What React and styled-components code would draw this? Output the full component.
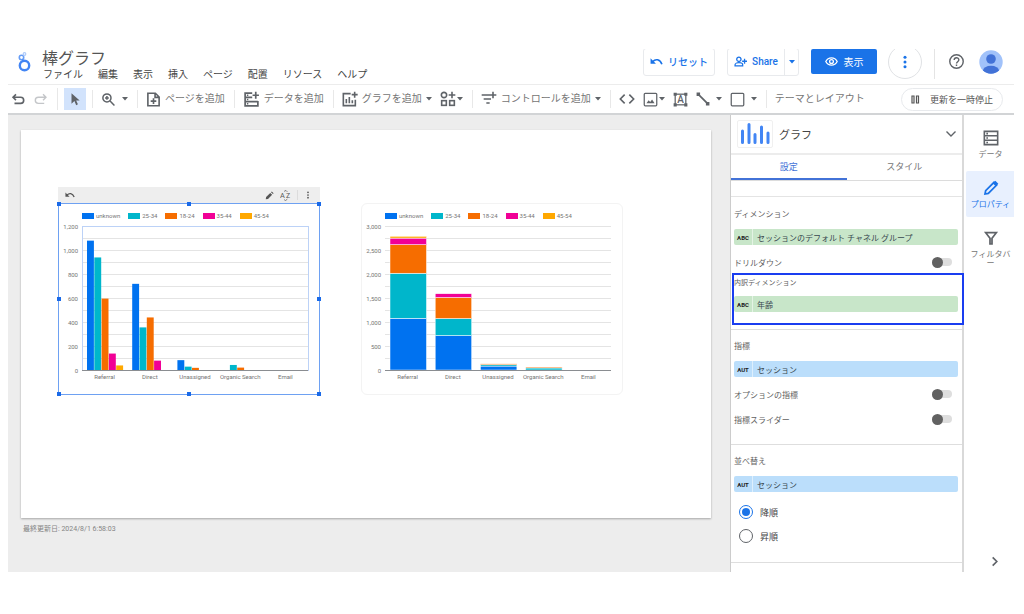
import React, { useState } from 'react'
import styled, { createGlobalStyle, css } from 'styled-components'

const GlobalStyle = createGlobalStyle`
  * {
    box-sizing: border-box;
  }
  body {
    margin: 0;
    background: #fff;
    color: #5f6368;
    font-family: Roboto, "Noto Sans CJK JP", sans-serif;
    font-size: 8px;
  }
  button {
    margin: 0;
    padding: 0;
    border: 0;
    background: none;
    color: inherit;
    font: inherit;
    white-space: nowrap;
    cursor: pointer;
  }
`

/* ---------- frame ---------- */

const Page = styled.div`
  display: flex;
  flex-direction: column;
  min-height: 100vh;
  padding: 49px 10px 42px 8px;
`
const Header = styled.header`
  display: flex;
  align-items: center;
  height: 36px;
  padding: 0 11px 10px 8px;
  border-bottom: 1px solid #ececec;
  overflow: hidden;
`
const Body = styled.div`
  display: flex;
  flex: 1;
`

/* ---------- header ---------- */

const TitleBlock = styled.div`
  display: flex;
  flex-direction: column;
  margin: 8px auto 0 10px;
`
const Title = styled.h1`
  margin: 0;
  color: #555;
  font-size: 16px;
  font-weight: 400;
  line-height: 18px;
`
const Menu = styled.nav`
  display: flex;
  gap: 15px;
  padding-left: 1px;
`
const MenuItem = styled.button`
  color: #444;
  font-size: 10px;
  line-height: 14px;
`
const OutlineGroup = styled.div`
  display: flex;
  flex-shrink: 0;
  height: 28px;
  margin-right: 12px;
  border: 1px solid #e8eaed;
  border-radius: 3px;
`
const OutlineButton = styled.button`
  display: flex;
  align-items: center;
  justify-content: center;
  gap: 5px;
  min-width: ${ props => props.$width }px;
  color: #1a73e8;
  font-size: 10px;
  font-weight: 500;

  & + & {
    border-left: 1px solid #e8eaed;
  }
`
const ViewButton = styled.button`
  display: flex;
  align-items: center;
  justify-content: center;
  flex-shrink: 0;
  gap: 6px;
  width: 66px;
  height: 25px;
  border-radius: 2px;
  background: #1a73e8;
  color: #fff;
  font-size: 10px;
`
const RoundButton = styled.button`
  display: flex;
  align-items: center;
  justify-content: center;
  flex-shrink: 0;
  width: 34px;
  height: 34px;
  margin: 0 12px 0 11px;
  border: 1px solid #e0e2e5;
  border-radius: 50%;
  color: #1a73e8;
`
const HeaderRule = styled.span`
  width: 1px;
  height: 34px;
  margin-right: 13px;
  background: #e4e4e4;
`
const IconButton = styled.button`
  display: flex;
  flex-shrink: 0;
`
const Avatar = styled.svg`
  flex-shrink: 0;
  margin-left: 14px;
`

/* ---------- toolbar ---------- */

const Toolbar = styled.div`
  display: flex;
  align-items: center;
  height: 30px;
  padding: 0 11px 0 2px;
  border-bottom: 2px solid #d2d4d6;
  color: #5f6368;
`
const ToolGroup = styled.div`
  display: flex;
  align-items: center;
  flex-shrink: 0;
  gap: ${ props => props.$gap || 8 }px;
  padding: 0 ${ props => props.$right || 9 }px 0 ${ props => props.$left || 8 }px;

  & + & {
    border-left: 1px solid #e8e8e8;
  }
`
const ToolButton = styled.button`
  display: flex;
  align-items: center;
  gap: ${ props => props.$gap || 4 }px;
  height: 18px;
  color: ${ props => props.$muted ? '#c4c6c9' : '#5f6368' };
  ${ props => props.$active && css`
    justify-content: center;
    width: 22px;
    height: 22px;
    background: #d2e3fc;
  ` }
`
const ToolText = styled.span`
  color: #757575;
  font-size: 10px;
  line-height: 14px;
`
const PauseButton = styled.button`
  display: flex;
  align-items: center;
  flex-shrink: 0;
  gap: 10px;
  height: 23px;
  margin-left: auto;
  padding: 0 9px;
  border: 1px solid #e8eaed;
  border-radius: 12px;
  color: #555;
  font-size: 9px;
`

/* ---------- report ---------- */

const Workspace = styled.main`
  flex: 1;
  min-width: 0;
  padding: 15px 19px 0 13px;
  background: #ededed;
`
const Report = styled.section`
  display: flex;
  align-items: flex-start;
  gap: 41px;
  min-height: 388px;
  padding: 57px 37px;
  background: #fff;
  box-shadow: 0 1px 2px rgba(0, 0, 0, 0.3);
`
const ChartFrame = styled.figure`
  flex: 0 0 262px;
  margin: ${ props => props.$bare ? '16px 0 0' : 0 };
`
const ChartToolbar = styled.div`
  display: flex;
  align-items: center;
  gap: 6px;
  height: 16px;
  padding: 0 8px 0 7px;
  background: #eee;
  color: #555;
`
const ChartToolRule = styled.span`
  width: 1px;
  height: 10px;
  background: #dcdcdc;
`
const Spacer = styled.span`
  flex: 1;
`
const ChartCard = styled.div`
  position: relative;
  height: 192px;
  padding-top: 8px;
  border-radius: ${ props => props.$selected ? 0 : '6px' };
  border: 1px solid ${ props => props.$selected ? '#6ea1f2' : '#f3f3f3' };
`
const Handle = styled.i`
  position: absolute;
  left: ${ props => props.$x }%;
  top: ${ props => props.$y }%;
  width: 4px;
  height: 4px;
  margin: -2px;
  background: #1a6ae8;
`
const Legend = styled.ul`
  display: flex;
  gap: 8px;
  margin: 0;
  padding: 0 0 0 23px;
  list-style: none;
  color: #757575;
  font-size: 6px;
  line-height: 7px;
`
const LegendItem = styled.li`
  display: flex;
  align-items: center;
  gap: 2px;

  &::before {
    content: '';
    width: 12px;
    height: 6px;
    background: ${ props => props.$color };
  }
`
const Plot = styled.svg`
  display: block;
  font-size: 6px;
  fill: #757575;
`
const Updated = styled.p`
  margin: 5px 2px;
  color: #858585;
  font-size: 7px;
  line-height: 12px;
`

/* ---------- properties panel ---------- */

const Panel = styled.aside`
  flex: 0 0 234px;
  border-left: 1px solid #ccc;
  border-right: 2px solid #d9d9d9;
  background: #fff;
`
const PanelHead = styled.div`
  display: flex;
  align-items: center;
  gap: 6px;
  height: 40px;
  padding: 0 5px 0 6px;
  border-bottom: 2px solid #ececec;
`
const ChartThumb = styled.span`
  display: flex;
  align-items: flex-end;
  justify-content: center;
  width: 36px;
  height: 28px;
  padding-bottom: 3px;
  border: 1px solid #f0f0f0;
  border-radius: 2px;
`
const PanelTitle = styled.h2`
  flex: 1;
  margin: 0;
  color: #444;
  font-size: 11px;
  font-weight: 400;
`
const Tabs = styled.div`
  display: flex;
  height: 26px;
  border-bottom: 1px solid #dcdcdc;
`
const Tab = styled.button`
  flex: 1;
  padding-bottom: 1px;
  border-bottom: 2px solid ${ props => props['aria-selected'] ? '#4272d7' : 'transparent' };
  color: ${ props => props['aria-selected'] ? '#4272d7' : '#757575' };
  font-size: 9px;
`
const Strip = styled.div`
  height: 16px;
  border-bottom: 1px solid #e4e4e4;
`
const Section = styled.section`
  padding: ${ props => props.$top || 9 }px 4px ${ props => props.$bottom }px 3px;
  border-bottom: 1px solid #dedede;
`
const Label = styled.h3`
  margin: 0 0 ${ props => props.$small ? 5 : 6 }px;
  color: #616161;
  font-size: ${ props => props.$small ? 7 : 8 }px;
  font-weight: 400;
  line-height: 16px;
`
const Chip = styled.button`
  display: flex;
  align-items: center;
  width: 100%;
  height: 16px;
  border-radius: 2px;
  background: ${ props => props.$kind === 'ABC' ? '#c8e6c9' : '#bbdefb' };
  color: #37474f;
  font-size: 8px;
`
const ChipType = styled.span`
  width: 19px;
  height: 16px;
  margin-right: 4px;
  border-right: 1px solid rgba(255, 255, 255, 0.5);
  color: #222;
  font-size: 6px;
  font-weight: 700;
  line-height: 17px;
`
const SwitchRow = styled.label`
  display: flex;
  align-items: center;
  justify-content: space-between;
  height: 16px;
  margin-top: 9px;
  padding-right: 6px;
  color: #616161;
  font-size: 8px;
`
const Switch = styled.input`
  appearance: none;
  display: flex;
  align-items: center;
  width: 20px;
  height: 8px;
  margin: 0;
  border-radius: 4px;
  background: #dedede;

  &::before {
    content: '';
    width: 11px;
    height: 11px;
    flex-shrink: 0;
    border-radius: 50%;
    background: #616161;
  }
  &:checked {
    justify-content: flex-end;
  }
`
const Highlight = styled.div`
  margin: 3px -6px 0 -2px;
  padding: 0 4px 11px 0;
  border: 2px solid #1a3df0;
`
const RadioRow = styled.label`
  display: flex;
  align-items: center;
  gap: 7px;
  height: 16px;
  margin: ${ props => props.$first ? 12 : 8 }px 0 0 5px;
  color: #444;
  font-size: 9px;
`
const Radio = styled.input`
  appearance: none;
  width: 14px;
  height: 14px;
  margin: 0;
  border: 1px solid #5f6368;
  border-radius: 50%;

  &:checked {
    padding: 2px;
    border-color: #1a73e8;
    background: #1a73e8;
    background-clip: content-box;
  }
`

/* ---------- right rail ---------- */

const Rail = styled.nav`
  display: flex;
  flex: 0 0 50px;
  flex-direction: column;
  gap: 4px;
  padding: 6px 0 5px 2px;
`
const RailItem = styled.button`
  display: flex;
  flex-direction: column;
  align-items: center;
  gap: 4px;
  height: 46px;
  padding: 9px 2px 0 3px;
  border-radius: 2px 0 0 2px;
  background: ${ props => props.$active ? '#e8f0fe' : 'none' };
  color: ${ props => props.$active ? '#1a73e8' : '#5f6368' };
`
const RailLabel = styled.span`
  max-width: 42px;
  color: ${ props => props.$active ? '#1a73e8' : '#757575' };
  font-size: 8px;
  line-height: 9px;
  white-space: normal;
  word-break: break-all;
  line-break: anywhere;
`
const Collapse = styled.button`
  align-self: flex-end;
  display: flex;
  margin: auto 14px 0 0;
`

/* ---------- icons ---------- */

const Svg = styled.svg`
  display: block;
  flex-shrink: 0;
  fill: none;
  stroke: currentColor;
  stroke-width: ${ props => props.$weight || 2 };
`
const Icon = ({ size = 14, weight, children }) => (
  <Svg width={ size } height={ size } viewBox="0 0 24 24" $weight={ weight } aria-hidden="true">
    { children }
  </Svg>
)
const Caret = () => (
  <Svg width="6" height="4" viewBox="0 0 6 4" aria-hidden="true">
    <path d="M0 0h6L3 3.5z" fill="currentColor" stroke="none" />
  </Svg>
)
const UndoIcon = () => (
  <Icon weight={ 2.8 }><path d="M8.500 4L3.500 9l5 5M4 9h12.500a5 5 0 0 1 0 10.500H6" /></Icon>
)
const RedoIcon = () => (
  <Icon weight={ 2.4 }><path d="M15.500 4l5 5-5 5M20 9H7.500a5 5 0 0 0 0 10.500h10" /></Icon>
)
const ResetIcon = ({ size = 12 }) => (
  <Icon size={ size } weight={ 3 }>
    <path d="M5 12C10 7 18 7 22 17" />
    <path d="M1 6v10h10z" fill="currentColor" stroke="none" />
  </Icon>
)
const PointerIcon = () => (
  <Icon size={ 14 }><path d="M6 2v18l5-4.500 3 7 3-1.400-3-6.700h6z" fill="currentColor" stroke="none" /></Icon>
)
const ZoomIcon = () => (
  <Icon size={ 15 } weight={ 2.4 }><circle cx="9.500" cy="9.500" r="6.500" /><path d="M14.500 14.500l7 7M9.500 6.500v6M6.500 9.500h6" /></Icon>
)
const AddPageIcon = () => (
  <Icon size={ 15 } weight={ 2.6 }><path d="M15 2H3v20h18V8zM14.500 2v6.500H21M12 10v9M7.500 14.500h9" /></Icon>
)
const AddDataIcon = () => (
  <Icon size={ 17 } weight={ 2.4 }>
    <path d="M13 3H3v18h18v-7M3 9h10M3 15h18M18 1v10M13.500 6h9" />
    <path d="M5.500 6h2M5.500 12h2M5.500 18h2" />
  </Icon>
)
const AddChartIcon = () => (
  <Icon size={ 16 } weight={ 2.4 }>
    <path d="M13 4H2v18h18v-9M19 1v9M14.500 5.500h9" />
    <path d="M6.500 12v6.500M11 9v9.500M15.500 14v4.500" />
  </Icon>
)
const WidgetsIcon = () => (
  <Icon size={ 16 } weight={ 2.4 }>
    <circle cx="6" cy="6" r="4" /><path d="M18 1v10M13 6h10" />
    <rect x="2.500" y="14.500" width="7" height="7" /><rect x="14.500" y="14.500" width="7" height="7" />
  </Icon>
)
const AddControlIcon = () => (
  <Icon size={ 16 } weight={ 2.4 }><path d="M1 6h22M18 1v10M4 12h11M8 18h5" /></Icon>
)
const CodeIcon = () => (
  <Icon size={ 16 } weight={ 2.4 }><path d="M8.500 5.500L2 12l6.500 6.500M15.500 5.500L22 12l-6.500 6.500" /></Icon>
)
const ImageIcon = () => (
  <Icon size={ 15 }>
    <rect x="2" y="2" width="20" height="20" rx="1.500" />
    <path d="M5.500 18l3.500-5 2.500 3 3-4 4 6z" fill="currentColor" stroke="none" />
  </Icon>
)
const TextIcon = () => (
  <Icon size={ 15 }>
    <rect x="3.500" y="3.500" width="17" height="17" />
    <path d="M1 1h5v5H1zM18 1h5v5h-5zM1 18h5v5H1zM18 18h5v5h-5z" fill="currentColor" stroke="none" />
    <text x="12" y="18" fontSize="16" fontWeight="500" textAnchor="middle" fill="currentColor" stroke="none">A</text>
  </Icon>
)
const LineIcon = () => (
  <Icon weight={ 3 }>
    <path d="M4 4l16 16" />
    <path d="M1 1h6v6H1zM17 17h6v6h-6z" fill="currentColor" stroke="none" />
  </Icon>
)
const RectIcon = () => <Icon size={ 15 }><rect x="2" y="2" width="20" height="20" rx="1.500" /></Icon>
const PauseIcon = () => (
  <Svg width="9" height="9" viewBox="0 0 9 9" $weight={ 1.2 } aria-hidden="true">
    <path d="M1 1h2v7H1zM5.500 1h2v7h-2z" />
  </Svg>
)
const PersonAddIcon = () => (
  <Icon size={ 13 } weight={ 2.4 }>
    <circle cx="9" cy="8" r="4" /><path d="M2 20v-2c0-5 14-5 14 0v2zM19.500 7v9M15 11.500h9" />
  </Icon>
)
const EyeIcon = () => (
  <Icon size={ 13 } weight={ 2.4 }>
    <path d="M1.500 12C6 3 18 3 22.500 12 18 21 6 21 1.500 12z" /><circle cx="12" cy="12" r="3.500" />
  </Icon>
)
const MoreIcon = ({ size }) => (
  <Icon size={ size }>
    <g fill="currentColor" stroke="none">
      <circle cx="12" cy="4" r="2.600" /><circle cx="12" cy="12" r="2.600" /><circle cx="12" cy="20" r="2.600" />
    </g>
  </Icon>
)
const HelpIcon = () => (
  <Icon size={ 17 }>
    <circle cx="12" cy="12" r="9.500" />
    <path d="M8.700 10c0-4.500 6.600-4.200 6.600-.4 0 2.600-3.300 2.700-3.300 5.200M12 16.300v2" />
  </Icon>
)
const PencilIcon = () => (
  <Icon size={ 9 }><path d="M2 22l1-6L14 5l5 5L8 21zM16 3l2-2 5 5-2 2z" fill="currentColor" stroke="none" /></Icon>
)
const SortIcon = () => (
  <Icon size={ 11 } weight={ 1.6 }>
    <text x="0" y="18" fontSize="16" fill="currentColor" stroke="none">A</text>
    <text x="13" y="18" fontSize="15" fill="currentColor" stroke="none">Z</text>
    <path d="M9 3l4-2 3 3M9 21l3 2 4-3" />
  </Icon>
)
const DataIcon = () => (
  <Icon size={ 16 } weight={ 2.4 }>
    <path d="M2 2h20v20H2zM2 8.700h20M2 15.300h20M5 5.400h2.500M5 12h2.500M5 18.700h2.500" />
  </Icon>
)
const EditIcon = () => (
  <Icon size={ 16 } weight={ 2.6 }>
    <path d="M3 21l1-5L16.500 3.500l4 4L8 20z" />
    <path d="M14.500 5l4-4L23 5.500l-4 4z" fill="currentColor" stroke="none" />
  </Icon>
)
const FilterIcon = () => (
  <Icon size={ 16 } weight={ 2.6 }><path d="M4 4h16l-6.500 8.500V21h-3v-8.500z" /></Icon>
)
const ChevronDown = () => <Icon size={ 12 } weight={ 2.8 }><path d="M3 7l9 9 9-9" /></Icon>
const ChevronRight = () => <Icon size={ 11 } weight={ 3.6 }><path d="M8 3l9 9-9 9" /></Icon>

const Logo = () => (
  <Svg width="16" height="24" viewBox="0 0 16 24" aria-hidden="true">
    <circle cx="8.500" cy="15.500" r="4.700" stroke="#4285f4" strokeWidth="2.400" />
    <circle cx="5.500" cy="7.500" r="2.200" stroke="#669df6" strokeWidth="1.600" />
    <circle cx="8.500" cy="4" r="1.300" stroke="#aecbfa" strokeWidth="1.200" />
    <path d="M6.500 9.500l.8 2" stroke="#4285f4" strokeWidth="1.500" />
  </Svg>
)

/* ---------- chart ---------- */

const series = [
    { name: 'unknown', color: '#0072f0' },
    { name: '25-34', color: '#00b6cb' },
    { name: '18-24', color: '#f66d00' },
    { name: '35-44', color: '#f10096' },
    { name: '45-54', color: '#ffa800' }
]
const channels = [
    { name: 'Referral', values: [1078, 938, 595, 137, 38] },
    { name: 'Direct', values: [718, 355, 438, 78, 0] },
    { name: 'Unassigned', values: [82, 28, 18, 0, 0] },
    { name: 'Organic Search', values: [0, 42, 20, 0, 0] },
    { name: 'Email', values: [0, 0, 0, 0, 0] }
]
const plot = { left: 23, top: 7, width: 226, height: 144 }
const band = plot.width / channels.length
const handles = [[0, 0], [50, 0], [100, 0], [0, 50], [100, 50], [0, 100], [50, 100], [100, 100]]

const BarChart = ({ max, step, stacked, selected }) => {
    const toHeight = (v) => v / max * plot.height
    const base = plot.top + plot.height
    const ticks = []
    for (let v = 0; v <= max; v += step / 2) {
        ticks.push(v)
    }
    const renderBars = (channel, i) => {
        const start = plot.left + i * band + 5
        let total = 0
        return channel.values.map((value, s) => {
            if (!value) return null
            const h = toHeight(value)
            const y = base - h - (stacked ? toHeight(total) : 0)
            total += value
            return (
              <rect
                key={ s }
                x={ stacked ? start : start + s * 7.3 }
                y={ y }
                width={ stacked ? 36.5 : 6.9 }
                height={ h }
                fill={ series[s].color }
                stroke={ stacked ? '#fff' : 'none' }
                strokeWidth="0.500"
              />
            )
        })
    }
    return (
      <ChartCard $selected={ selected }>
        <Legend>
          { series.map(s => <LegendItem key={ s.name } $color={ s.color }>{ s.name }</LegendItem>) }
        </Legend>
        <Plot width="260" height="166" role="img" aria-label="セッション">
          { ticks.map(v => {
              const y = Math.round(base - toHeight(v)) + 0.5
              return (
                <g key={ v }>
                  <path d={ `M${plot.left} ${y}h${plot.width}` } stroke="#e4e4e4" />
                  { v % step === 0 && <text x="19" y={ y + 2 } textAnchor="end">{ v.toLocaleString('en-US') }</text> }
                </g>
              )
          }) }
          { selected && (
            <rect x={ plot.left + 0.5 } y={ plot.top + 0.5 } width={ plot.width } height={ plot.height } fill="none" stroke="#bcd2f7" />
          ) }
          { channels.map(renderBars) }
          <path d={ `M${plot.left} ${base + 0.5}h${plot.width}` } stroke="#8a8d91" />
          { channels.map((c, i) => (
            <text key={ c.name } x={ plot.left + band * (i + 0.5) } y={ base + 9 } textAnchor="middle">{ c.name }</text>
          )) }
        </Plot>
        { selected && handles.map(([x, y]) => <Handle key={ `${x}-${y}` } $x={ x } $y={ y } />) }
      </ChartCard>
    )
}

/* ---------- parts ---------- */

const Field = ({ kind, children }) => (
  <Chip $kind={ kind }>
    <ChipType>{ kind }</ChipType>
    { children }
  </Chip>
)
const Toggle = ({ children }) => (
  <SwitchRow>
    { children }
    <Switch type="checkbox" role="switch" />
  </SwitchRow>
)

const menu = ['ファイル', '編集', '表示', '挿入', 'ページ', '配置', 'リソース', 'ヘルプ']

const TopBar = () => (
  <Header>
    <Logo />
    <TitleBlock>
      <Title>棒グラフ</Title>
      <Menu>
        { menu.map(item => <MenuItem key={ item }>{ item }</MenuItem>) }
      </Menu>
    </TitleBlock>
    <OutlineGroup>
      <OutlineButton $width={ 70 }><ResetIcon size={ 13 } />リセット</OutlineButton>
    </OutlineGroup>
    <OutlineGroup>
      <OutlineButton $width={ 56 }><PersonAddIcon />Share</OutlineButton>
      <OutlineButton $width={ 14 } aria-label="共有オプション"><Caret /></OutlineButton>
    </OutlineGroup>
    <ViewButton><EyeIcon />表示</ViewButton>
    <RoundButton aria-label="その他"><MoreIcon size={ 14 } /></RoundButton>
    <HeaderRule />
    <IconButton aria-label="ヘルプ"><HelpIcon /></IconButton>
    <Avatar width="24" height="24" viewBox="0 0 24 24">
      <clipPath id="avatar"><circle cx="12" cy="12" r="11.700" /></clipPath>
      <g clipPath="url(#avatar)">
        <path d="M0 0h24v24H0z" fill="#a1c2fa" />
        <circle cx="12" cy="9" r="4.800" fill="#4272d7" />
        <ellipse cx="12" cy="20.500" rx="8" ry="4.700" fill="#4272d7" />
      </g>
    </Avatar>
  </Header>
)

const Tools = () => (
  <Toolbar>
    <ToolGroup $gap={ 9 } $left={ 1 } $right={ 9 }>
      <ToolButton aria-label="元に戻す"><UndoIcon /></ToolButton>
      <ToolButton $muted aria-label="やり直す"><RedoIcon /></ToolButton>
    </ToolGroup>
    <ToolGroup $left={ 6 } $right={ 6 }>
      <ToolButton $active aria-label="選択"><PointerIcon /></ToolButton>
    </ToolGroup>
    <ToolGroup>
      <ToolButton $gap={ 6 } aria-label="ズーム"><ZoomIcon /><Caret /></ToolButton>
    </ToolGroup>
    <ToolGroup>
      <ToolButton><AddPageIcon /><ToolText>ページを追加</ToolText></ToolButton>
    </ToolGroup>
    <ToolGroup>
      <ToolButton><AddDataIcon /><ToolText>データを追加</ToolText></ToolButton>
    </ToolGroup>
    <ToolGroup>
      <ToolButton><AddChartIcon /><ToolText>グラフを追加</ToolText><Caret /></ToolButton>
      <ToolButton $gap={ 1 } aria-label="コミュニティ ビジュアリゼーション"><WidgetsIcon /><Caret /></ToolButton>
    </ToolGroup>
    <ToolGroup>
      <ToolButton><AddControlIcon /><ToolText>コントロールを追加</ToolText><Caret /></ToolButton>
    </ToolGroup>
    <ToolGroup>
      <ToolButton aria-label="URL の埋め込み"><CodeIcon /></ToolButton>
      <ToolButton $gap={ 1 } aria-label="画像"><ImageIcon /><Caret /></ToolButton>
      <ToolButton aria-label="テキスト"><TextIcon /></ToolButton>
      <ToolButton $gap={ 6 } aria-label="線"><LineIcon /><Caret /></ToolButton>
      <ToolButton $gap={ 6 } aria-label="図形"><RectIcon /><Caret /></ToolButton>
    </ToolGroup>
    <ToolGroup>
      <ToolButton><ToolText>テーマとレイアウト</ToolText></ToolButton>
    </ToolGroup>
    <PauseButton><PauseIcon />更新を一時停止</PauseButton>
  </Toolbar>
)

const Properties = () => {
    const [tab, setTab] = useState('設定')
    return (
      <Panel>
        <PanelHead>
          <ChartThumb>
            <svg width="30" height="21" viewBox="0 0 30 21" aria-hidden="true">
              <path d="M2.500 19.500V8M9 19.500V1.500M15 19.500V11.500M21.500 19.500V4M28 19.500V10" stroke="#4285f4" strokeWidth="3" strokeLinecap="round" />
            </svg>
          </ChartThumb>
          <PanelTitle>グラフ</PanelTitle>
          <IconButton aria-label="グラフの種類"><ChevronDown /></IconButton>
        </PanelHead>
        <Tabs role="tablist">
          { ['設定', 'スタイル'].map(name => (
            <Tab key={ name } role="tab" aria-selected={ tab === name } onClick={ () => setTab(name) }>{ name }</Tab>
          )) }
        </Tabs>
        <Strip />
        <Section $top={ 10 } $bottom={ 4 }>
          <Label>ディメンション</Label>
          <Field kind="ABC">セッションのデフォルト チャネル グループ</Field>
          <Toggle>ドリルダウン</Toggle>
          <Highlight>
            <Label $small>内訳ディメンション</Label>
            <Field kind="ABC">年齢</Field>
          </Highlight>
        </Section>
        <Section $bottom={ 17 }>
          <Label>指標</Label>
          <Field kind="AUT">セッション</Field>
          <Toggle>オプションの指標</Toggle>
          <Toggle>指標スライダー</Toggle>
        </Section>
        <Section $bottom={ 18 }>
          <Label>並べ替え</Label>
          <Field kind="AUT">セッション</Field>
          <RadioRow $first><Radio type="radio" name="order" defaultChecked />降順</RadioRow>
          <RadioRow><Radio type="radio" name="order" />昇順</RadioRow>
        </Section>
      </Panel>
    )
}

export default function App() {
    return (
      <Page>
        <GlobalStyle />
        <TopBar />
        <Tools />
        <Body>
          <Workspace>
            <Report>
              <ChartFrame>
                <ChartToolbar>
                  <IconButton aria-label="リセット"><ResetIcon size={ 10 } /></IconButton>
                  <Spacer />
                  <IconButton aria-label="編集"><PencilIcon /></IconButton>
                  <IconButton aria-label="並べ替え"><SortIcon /></IconButton>
                  <ChartToolRule />
                  <IconButton aria-label="その他"><MoreIcon size={ 8 } /></IconButton>
                </ChartToolbar>
                <BarChart max={ 1200 } step={ 200 } selected />
              </ChartFrame>
              <ChartFrame $bare>
                <BarChart max={ 3000 } step={ 500 } stacked />
              </ChartFrame>
            </Report>
            <Updated>最終更新日: 2024/8/1 6:58:03</Updated>
          </Workspace>
          <Properties />
          <Rail>
            <RailItem><DataIcon /><RailLabel>データ</RailLabel></RailItem>
            <RailItem $active><EditIcon /><RailLabel $active>プロパティ</RailLabel></RailItem>
            <RailItem><FilterIcon /><RailLabel>フィルタバー</RailLabel></RailItem>
            <Collapse aria-label="パネルを閉じる"><ChevronRight /></Collapse>
          </Rail>
        </Body>
      </Page>
    )
}
